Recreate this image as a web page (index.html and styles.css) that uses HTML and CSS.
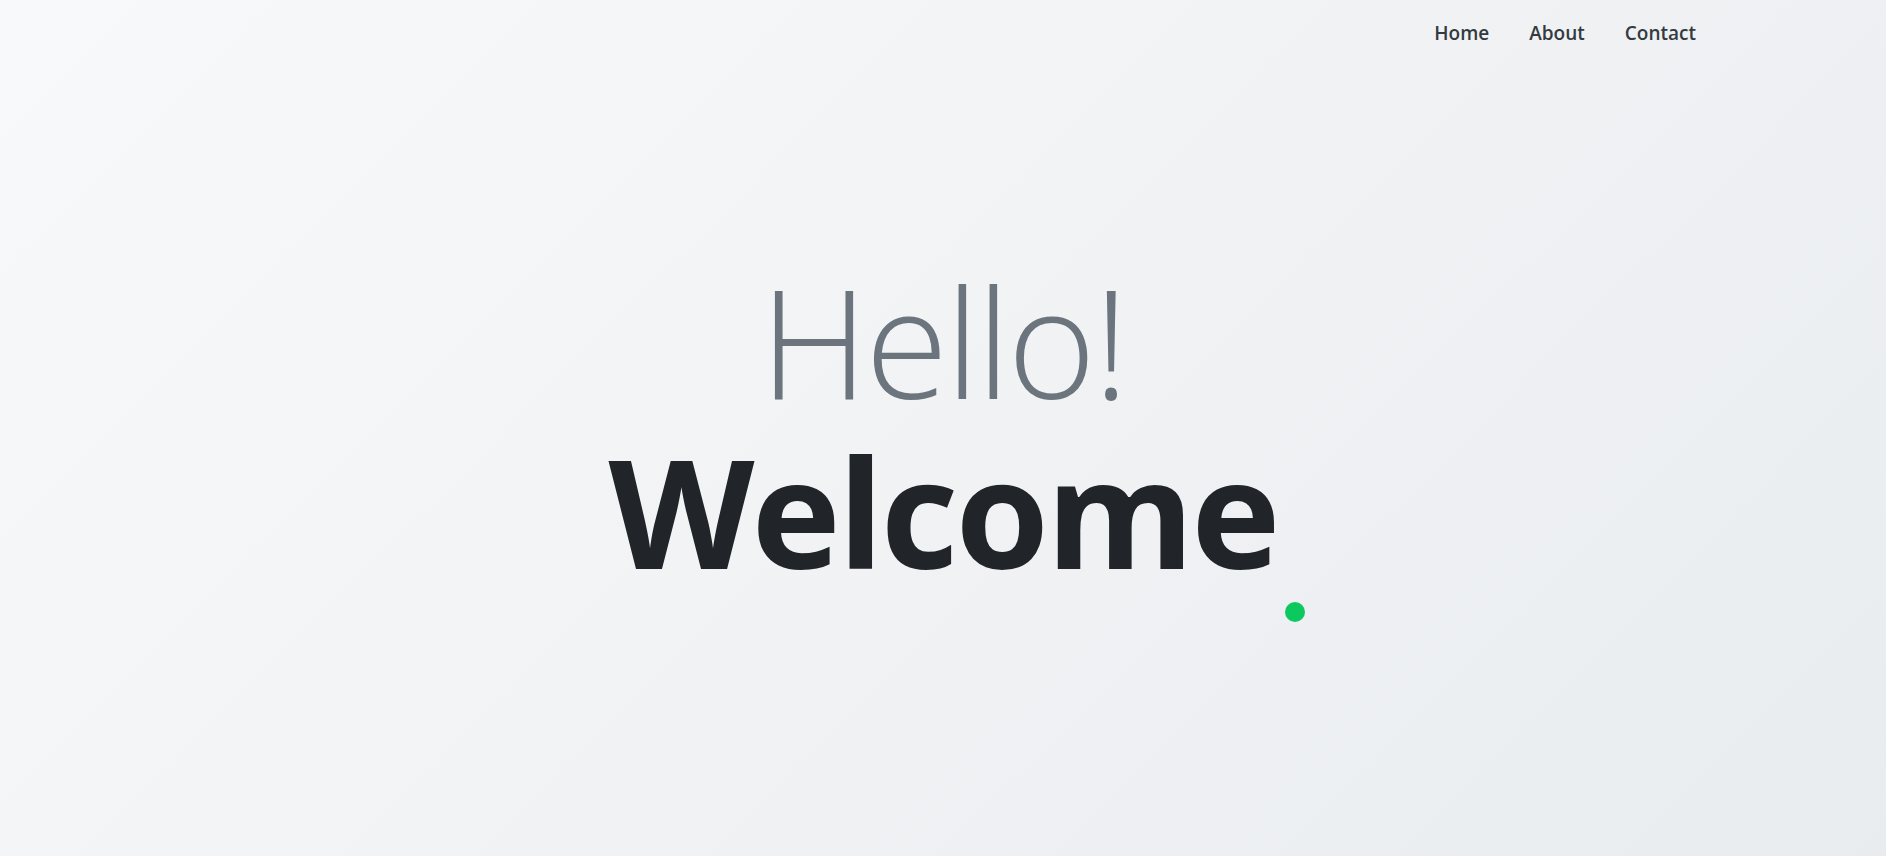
FILE: index.html
```html
<!DOCTYPE html>
<html lang="en">
<head>
<meta charset="utf-8">
<title>Welcome</title>
<link rel="stylesheet" href="styles.css">
</head>
<body>
<header class="topbar">
  <nav class="nav">
    <a class="nav-link" href="#">Home</a>
    <a class="nav-link" href="#">About</a>
    <a class="nav-link" href="#">Contact</a>
  </nav>
</header>
<main class="hero">
  <h1 class="hello">Hello!</h1>
  <h2 class="welcome">Welcome<span class="dot"></span></h2>
</main>
</body>
</html>
```
FILE: styles.css
```css
html, body {
  margin: 0;
  padding: 0;
}
body {
  height: 100vh;
  overflow: hidden;
  background: linear-gradient(135deg, #f8f9fa 0%, #e9ecef 100%);
  font-family: "Open Sans", "Noto Sans", sans-serif;
}
.topbar {
  display: flex;
  justify-content: flex-end;
  padding: 12px 170px 0 0;
}
.nav {
  display: flex;
}
.nav-link {
  display: block;
  padding: 8px 20px;
  font-size: 19px;
  font-weight: 600;
  color: #343a40;
  text-decoration: none;
}
.hero {
  display: flex;
  flex-direction: column;
  align-items: center;
  padding-top: 211px;
}
.hello {
  margin: 0;
  font-size: 151px;
  line-height: 1;
  font-weight: 300;
  letter-spacing: -3px;
  color: #6c757d;
}
.welcome {
  position: relative;
  margin: 19px 0 0;
  font-size: 151px;
  line-height: 1;
  font-weight: 700;
  letter-spacing: -3px;
  color: #212529;
}
.dot {
  position: absolute;
  right: -28px;
  bottom: -36px;
  width: 20px;
  height: 20px;
  border-radius: 50%;
  background: #0bc95e;
}
```
